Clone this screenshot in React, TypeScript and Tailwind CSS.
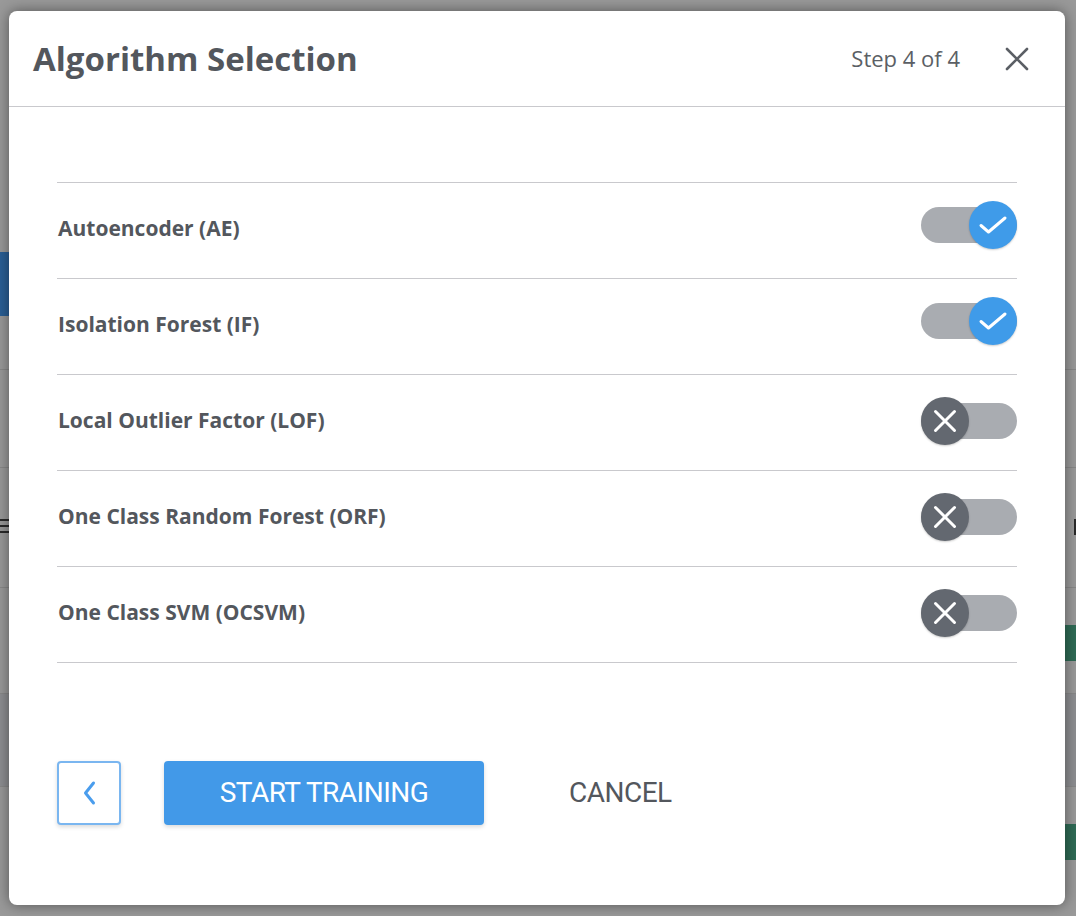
import { useState } from "react";

type Algo = { name: string; enabled: boolean };

const initialAlgos: Algo[] = [
  { name: "Autoencoder (AE)", enabled: true },
  { name: "Isolation Forest (IF)", enabled: true },
  { name: "Local Outlier Factor (LOF)", enabled: false },
  { name: "One Class Random Forest (ORF)", enabled: false },
  { name: "One Class SVM (OCSVM)", enabled: false },
];

function Toggle({ on, onClick }: { on: boolean; onClick: () => void }) {
  return (
    <button
      onClick={onClick}
      className={`relative w-[96px] h-[48px] flex items-center ${on ? "-mt-[12px]" : "-mt-[4px]"}`}
    >
      <span className="block w-full h-[36px] rounded-full bg-[#a9acb1]" />
      {on ? (
        <span className="absolute right-0 top-0 w-12 h-12 rounded-full bg-[#3f9be9] flex items-center justify-center shadow-[0_1px_2px_rgba(0,0,0,0.2)]">
          <svg width="48" height="48" viewBox="0 0 48 48" fill="none">
            <path d="M12 24.5 L19.5 31 L36 17" stroke="white" strokeWidth="3" strokeLinecap="round" strokeLinejoin="round" />
          </svg>
        </span>
      ) : (
        <span className="absolute left-0 top-0 w-12 h-12 rounded-full bg-[#636870] flex items-center justify-center shadow-[0_1px_2px_rgba(0,0,0,0.2)]">
          <svg width="48" height="48" viewBox="0 0 48 48" fill="none">
            <path d="M14.5 14.5 L33.5 33.5 M33.5 14.5 L14.5 33.5" stroke="white" strokeWidth="3" strokeLinecap="round" />
          </svg>
        </span>
      )}
    </button>
  );
}

export default function App() {
  const [algos, setAlgos] = useState(initialAlgos);

  const toggle = (i: number) =>
    setAlgos((prev) => prev.map((a, j) => (j === i ? { ...a, enabled: !a.enabled } : a)));

  return (
    <div className="relative w-[1076px] h-[916px] overflow-hidden bg-[#f7f7f7] font-['Open_Sans',sans-serif]">
      {/* page behind the dialog */}
      <div className="flex flex-col h-full">
        <div className="h-[252px]" />
        <div className="h-[64px] w-[120px] bg-[#4499f0] text-white font-bold text-2xl flex items-center justify-end pr-1">N</div>
        <div className="h-[54px] border-b border-[#dcdcdc]" />
        <div className="h-[98px] border-b border-[#dcdcdc]" />
        <div className="h-[120px] border-b border-[#dcdcdc] flex items-start justify-between pt-[51px]">
          <div className="w-[14px] flex flex-col gap-[4px]">
            <span className="h-[2px] bg-[#444]" />
            <span className="h-[2px] bg-[#444]" />
            <span className="h-[2px] bg-[#444]" />
          </div>
          <span className="w-[2px] h-[16px] bg-[#444]" />
        </div>
        <div className="h-[106px] border-b border-[#dcdcdc] flex justify-end pt-[37px]">
          <span className="w-[20px] h-[36px] rounded-l bg-[#4cad89]" />
        </div>
        <div className="h-[93px] border-b border-[#dcdcdc] bg-[#e4e6ea]" />
        <div className="flex-1 flex justify-end pt-[37px]">
          <span className="w-[20px] h-[36px] rounded-l bg-[#4cad89]" />
        </div>
      </div>

      {/* backdrop */}
      <div className="absolute inset-0 bg-black/[0.38]" />

      {/* dialog */}
      <div className="absolute left-[9px] top-[11px] w-[1056px] h-[894px] bg-white rounded-lg shadow-[0_0_14px_rgba(0,0,0,0.45)] flex flex-col text-[#53575d]">
        <div className="h-[96px] shrink-0 flex items-center border-b border-[#c9c9cd] pl-[24px] pr-[36px]">
          <h1 className="text-[33px] font-bold leading-none">Algorithm Selection</h1>
          <span className="ml-auto text-[22px] text-[#5b5f65]">Step 4 of 4</span>
          <button className="ml-[45px] text-[#5b5f65]">
            <svg width="24" height="24" viewBox="0 0 24 24" fill="none">
              <path d="M2 2 L22 22 M22 2 L2 22" stroke="currentColor" strokeWidth="2.6" strokeLinecap="round" />
            </svg>
          </button>
        </div>

        <div className="px-[48px] pt-[75px]">
          <ul className="border-t border-[#c9c9cd]">
            {algos.map((a, i) => (
              <li key={a.name} className="h-[96px] border-b border-[#c9c9cd] flex items-center justify-between pl-[1px]">
                <span className="text-[21px] font-bold -mt-[4px]">{a.name}</span>
                <Toggle on={a.enabled} onClick={() => toggle(i)} />
              </li>
            ))}
          </ul>
        </div>

        <div className="mt-[98px] px-[48px] flex items-center font-['Roboto',sans-serif]">
          <button className="w-16 h-16 rounded border-2 border-[#7ab6f0] bg-white flex items-center justify-center shadow-[0_2px_4px_rgba(0,0,0,0.15)] text-[#4a9ded]">
            <svg width="14" height="26" viewBox="0 0 14 26" fill="none">
              <path d="M11.5 3 L3.5 13 L11.5 23" stroke="currentColor" strokeWidth="3" strokeLinecap="round" strokeLinejoin="round" />
            </svg>
          </button>
          <button className="ml-[43px] w-[320px] h-16 rounded bg-[#4299e8] text-white text-[28px] tracking-[-0.5px] shadow-[0_2px_4px_rgba(0,0,0,0.15)]">
            START TRAINING
          </button>
          <button className="ml-[85px] text-[28px] tracking-[-0.5px] text-[#53575d]">CANCEL</button>
        </div>
      </div>
    </div>
  );
}
